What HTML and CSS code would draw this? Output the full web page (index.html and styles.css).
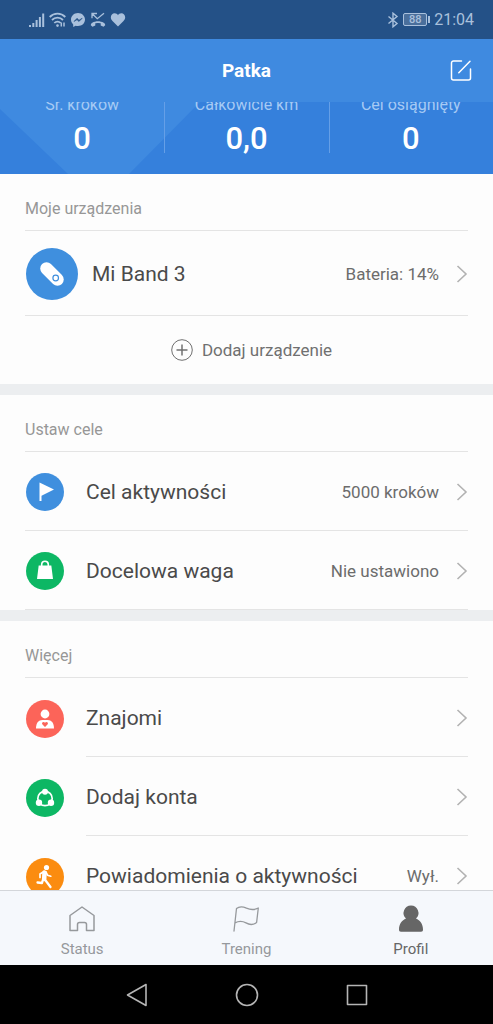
FILE: index.html
```html
<!DOCTYPE html>
<html lang="pl">
<head>
<meta charset="utf-8">
<meta name="viewport" content="width=device-width, initial-scale=1">
<title>Profil</title>
<link rel="stylesheet" href="styles.css">
</head>
<body>
<div class="app">
  <div class="status-bar">
    <div class="status-group">
      <svg width="16" height="16" viewBox="0 0 16 16" fill="currentColor"><path d="M0 13h2v2H0zM3.300 11h2v4h-2zM6.600 8h2v7h-2zM9.900 5h2v10h-2zM13.200 1.500h2V15h-2z"/></svg>
      <svg width="17" height="16" viewBox="0 0 17 16" fill="none" stroke="currentColor" stroke-width="1.800"><path d="M.7 5C5 .6 12 .6 16.300 5M3 8c3-3.100 8-3.100 11 0M5.300 11c1.800-1.900 4.600-1.900 6.400 0"/><circle cx="8.500" cy="13.600" r="1.300" fill="currentColor" stroke="none"/><path d="M12.300 10.500v4M15 10.500v4" stroke-width="1.500"/></svg>
      <svg width="16" height="16" viewBox="0 0 16 16"><path fill="currentColor" d="M8 1C4 1 1 3.900 1 7.600c0 2 .8 3.600 2.200 4.800V15l2.400-1.200c.8.2 1.600.3 2.400.3 4 0 7-2.800 7-6.500S12 1 8 1z"/><path d="M4 9.500l3-3.200 2 1.900 3.200-2L9 9.500 7 7.700z" fill="#245187" stroke="#245187" stroke-width=".6"/></svg>
      <svg width="16" height="16" viewBox="0 0 16 16" fill="none" stroke="currentColor"><path d="M7 1.500H2v4.800M2.300 1.800l5 4.900 6.700-5.500" stroke-width="1.300"/><path d="M.8 13.200c0-1 .5-1.900 1.500-2.500 3.300-2 8-2 11.400 0 1 .6 1.500 1.500 1.500 2.500l-1.700 1.500-2.800-1.300v-2.100a9 9 0 0 0-5.400 0v2.100l-2.800 1.300z" fill="currentColor" stroke="none"/></svg>
      <svg width="16" height="16" viewBox="0 0 16 16" fill="currentColor"><path d="M8 14.500L2.500 9C-.8 5.500 1.200 1.300 4.700 1.300c1.400 0 2.600.7 3.300 1.900.7-1.200 1.900-1.900 3.300-1.900 3.500 0 5.500 4.200 2.200 7.700z"/></svg>
    </div>
    <div class="status-group">
      <svg width="12" height="16" viewBox="0 0 12 16" fill="none" stroke="currentColor" stroke-width="1.400"><path d="M1.500 4.500l8.500 7-4 3.300V1.200l4 3.300-8.500 7"/></svg>
      <span class="battery"><span class="battery-level">88</span></span>
      <span class="clock">21:04</span>
    </div>
  </div>

  <header class="title-bar">
    <h1 class="title">Patka</h1>
    <button class="edit" aria-label="Edytuj">
      <svg width="22" height="22" viewBox="0 0 22 22" fill="none" stroke="currentColor" stroke-width="1.500" stroke-linecap="round" stroke-linejoin="round"><path d="M11.500 1H3.500A2 2 0 0 0 1.500 3v15a2 2 0 0 0 2 2h15a2 2 0 0 0 2-2V9M8.800 12.700L20 1.200"/></svg>
    </button>
  </header>

  <section class="stats">
    <div class="stat"><span class="stat-label">Śr. kroków</span><span class="stat-value">0</span></div>
    <div class="stat"><span class="stat-label">Całkowicie km</span><span class="stat-value">0,0</span></div>
    <div class="stat"><span class="stat-label">Cel osiągnięty</span><span class="stat-value">0</span></div>
  </section>

  <main class="content">
    <section class="card">
      <h2 class="card-title">Moje urządzenia</h2>
      <a class="row row-device" href="#">
        <svg class="row-icon" width="52" height="52" viewBox="0 0 52 52"><circle cx="26" cy="26" r="26" fill="#3f8fde"/><path d="M20.500 20.500l11 11" stroke="#fff" stroke-width="12.500" stroke-linecap="round"/><circle cx="29.700" cy="30" r="2.800" fill="none" stroke="#3f8fde" stroke-width="1.200"/></svg>
        <span class="row-body"><span class="row-name">Mi Band 3</span><span class="row-value">Bateria: 14%</span><svg class="chevron" width="12" height="20" viewBox="0 0 12 20"><path d="M1.500 2l8.500 8-8.500 8"/></svg></span>
      </a>
      <button class="add-device">
        <svg width="22" height="22" viewBox="0 0 22 22" fill="none" stroke="currentColor"><circle cx="11" cy="11" r="10.300" stroke-width="1"/><path d="M11 5.500v11M5.500 11h11" stroke-width="1.500"/></svg>
        <span>Dodaj urządzenie</span>
      </button>
    </section>

    <section class="card">
      <h2 class="card-title">Ustaw cele</h2>
      <a class="row" href="#">
        <svg class="row-icon" width="38" height="38" viewBox="0 0 38 38"><circle cx="19" cy="19" r="19" fill="#3f8fde"/><path d="M13.500 9.500l14.500 7-12.500 6.200V28h-2z" fill="#fff"/></svg>
        <span class="row-body"><span class="row-name">Cel aktywności</span><span class="row-value">5000 kroków</span><svg class="chevron" width="12" height="20" viewBox="0 0 12 20"><path d="M1.500 2l8.500 8-8.500 8"/></svg></span>
      </a>
      <a class="row" href="#">
        <svg class="row-icon" width="38" height="38" viewBox="0 0 38 38"><circle cx="19" cy="19" r="19" fill="#0db764"/><path d="M12.700 13.500h12.600L27 27H11z" fill="#fff"/><path d="M15.700 14v-1.500a3.300 3.300 0 0 1 6.600 0V14" fill="none" stroke="#fff" stroke-width="1.600"/></svg>
        <span class="row-body"><span class="row-name">Docelowa waga</span><span class="row-value">Nie ustawiono</span><svg class="chevron" width="12" height="20" viewBox="0 0 12 20"><path d="M1.500 2l8.500 8-8.500 8"/></svg></span>
      </a>
    </section>

    <section class="card card-inset">
      <h2 class="card-title">Więcej</h2>
      <a class="row" href="#">
        <svg class="row-icon" width="38" height="38" viewBox="0 0 38 38"><circle cx="19" cy="19" r="19" fill="#fc6459"/><circle cx="19" cy="14" r="4.400" fill="#fff"/><path d="M10 28.500c0-5.800 2.700-8.500 6.300-8.500h5.400c3.600 0 6.300 2.700 6.300 8.500z" fill="#fff"/><path d="M19 27l-2.500-2.500c-1.500-1.600.9-3.600 2.500-1.800 1.600-1.800 4 .2 2.500 1.800z" fill="#fc6459"/></svg>
        <span class="row-body"><span class="row-name">Znajomi</span><svg class="chevron" width="12" height="20" viewBox="0 0 12 20"><path d="M1.500 2l8.500 8-8.500 8"/></svg></span>
      </a>
      <a class="row" href="#">
        <svg class="row-icon" width="38" height="38" viewBox="0 0 38 38"><circle cx="19" cy="19" r="19" fill="#0db764"/><circle cx="19" cy="19.500" r="7.200" fill="none" stroke="#fff" stroke-width="1.700"/><g fill="#fff"><circle cx="19" cy="12.700" r="3"/><circle cx="13" cy="23.700" r="3.200"/><circle cx="25" cy="23.700" r="3.200"/></g></svg>
        <span class="row-body"><span class="row-name">Dodaj konta</span><svg class="chevron" width="12" height="20" viewBox="0 0 12 20"><path d="M1.500 2l8.500 8-8.500 8"/></svg></span>
      </a>
      <a class="row" href="#">
        <svg class="row-icon" width="38" height="38" viewBox="0 0 38 38"><circle cx="19" cy="19" r="19" fill="#fb8c10"/><circle cx="20.500" cy="9.500" r="2.600" fill="#fff"/><g fill="none" stroke="#fff" stroke-linecap="round" stroke-linejoin="round"><path d="M18.500 14.500l-.3 6.500" stroke-width="4.500"/><path d="M18 13.500l-4 2.500v3.500M20 14l1.500 3.200 3.300 1" stroke-width="1.700"/><path d="M18.800 21.500l2.700 3.500 3 4M17 21.500l-1 3.500-4.500-.5" stroke-width="2.300"/></g></svg>
        <span class="row-body"><span class="row-name">Powiadomienia o aktywności</span><span class="row-value">Wył.</span><svg class="chevron" width="12" height="20" viewBox="0 0 12 20"><path d="M1.500 2l8.500 8-8.500 8"/></svg></span>
      </a>
    </section>
  </main>

  <nav class="tabs">
    <a class="tab" href="#">
      <svg width="28" height="28" viewBox="0 0 28 28" fill="none" stroke="currentColor" stroke-width="1.500" stroke-linejoin="round"><path d="M2 10.500L14 2l12 8.500v15h-7.500v-6q0-2-2-2h-5q-2 0-2 2v6H2z"/></svg>
      <span>Status</span>
    </a>
    <a class="tab" href="#">
      <svg width="28" height="28" viewBox="0 0 28 28" fill="none" stroke="currentColor" stroke-width="1.300" stroke-linecap="round" stroke-linejoin="round"><path d="M2 26L4.500 3.500c3-2.500 6.500-2 10-.3 4 1.700 8 1.800 11.800-.2l-1.700 14.500c-3.300 2.500-7 2.500-10.600.4-4-2.200-7-2.200-11 0"/></svg>
      <span>Trening</span>
    </a>
    <a class="tab tab-active" href="#" aria-current="page">
      <svg width="28" height="28" viewBox="0 0 28 28" fill="currentColor"><path d="M14 .5a7.500 7.500 0 0 0-5 13c-4 1.700-7 5.500-7 11 0 1.500.6 2.200 2 2.200h20c1.400 0 2-.7 2-2.200 0-5.500-3-9.300-7-11a7.500 7.500 0 0 0-5-13z"/></svg>
      <span>Profil</span>
    </a>
  </nav>

  <div class="system-nav">
    <button class="system-button" aria-label="Wstecz"><svg width="24" height="24" viewBox="0 0 24 24"><path d="M21 1.500v21L2.500 12z"/></svg></button>
    <button class="system-button" aria-label="Ekran główny"><svg width="24" height="24" viewBox="0 0 24 24"><circle cx="12" cy="12" r="10.500"/></svg></button>
    <button class="system-button" aria-label="Ostatnie"><svg width="24" height="24" viewBox="0 0 24 24"><path d="M2.500 2.500h19v19h-19z"/></svg></button>
  </div>
</div>
</body>
</html>
```

FILE: styles.css
```css
* {
  box-sizing: border-box;
}

body {
  margin: 0;
  font-family: Roboto, "Noto Sans", sans-serif;
  color: #4a4a4a;
}

h1,
h2 {
  margin: 0;
}

a {
  color: inherit;
  text-decoration: none;
}

button {
  padding: 0;
  border: 0;
  background: none;
  color: inherit;
  font: inherit;
}

svg {
  display: block;
  flex: none;
}

.app {
  display: flex;
  flex-direction: column;
  height: 100vh;
  overflow: hidden;
  background: #fdfdfd;
}

.status-bar {
  display: flex;
  flex: none;
  align-items: center;
  justify-content: space-between;
  height: 39px;
  padding: 0 19px 0 29px;
  background: #245187;
  color: #a9c0dc;
}

.status-group {
  display: flex;
  align-items: center;
  gap: 4px;
}

.battery {
  display: flex;
  align-items: center;
  gap: 1px;
}

.battery::after {
  content: "";
  width: 2px;
  height: 7px;
  background: currentColor;
}

.battery-level {
  width: 24px;
  border: 1px solid currentColor;
  border-radius: 2px;
  background: #4a6f9c;
  font-size: 11px;
  font-weight: 500;
  line-height: 11px;
  text-align: center;
}

.clock {
  font-size: 16px;
  line-height: 20px;
}

.title-bar {
  display: grid;
  flex: none;
  grid-template-columns: 1fr auto 1fr;
  align-items: center;
  height: 63px;
  padding: 0 21px;
  background: #3f8ae0;
  color: #fff;
}

.title {
  grid-column: 2;
  font-size: 19px;
  font-weight: 700;
  line-height: 24px;
}

.edit {
  justify-self: end;
}

.stats {
  position: relative;
  display: flex;
  flex: none;
  height: 72px;
  overflow: hidden;
  background: #3580dc;
  color: #fff;
}

.stats::before {
  content: "";
  position: absolute;
  inset: 0 auto 0 0;
  width: 200px;
  background: #3f8ae0;
  clip-path: polygon(0 0, 100% 0, 129px 100%, 68px 100%, 0 7px);
}

.stat {
  position: relative;
  display: flex;
  flex: 1;
  flex-direction: column;
  align-items: center;
  justify-content: flex-end;
  gap: 3px;
  padding-bottom: 14px;
}

.stat + .stat::before {
  content: "";
  position: absolute;
  top: 0;
  bottom: 21px;
  left: 0;
  width: 1px;
  background: #659fe7;
}

.stat-label {
  color: #a6caf4;
  font-size: 16px;
  line-height: 20px;
}

.stat-value {
  font-size: 31px;
  font-weight: 500;
  line-height: 42px;
}

.content {
  flex: 1;
  min-height: 0;
  overflow: hidden;
}

.card + .card {
  border-top: 11px solid #eceef0;
}

.card-title {
  height: 57px;
  margin: 0 25px;
  padding-top: 12px;
  border-bottom: 1px solid #e4e4e4;
  color: #979797;
  font-size: 16px;
  font-weight: 400;
  line-height: 45px;
}

.row {
  display: flex;
  align-items: center;
  height: 79px;
  margin: 0 25px;
  padding: 2px 0 0 1px;
  border-bottom: 1px solid #e4e4e4;
}

.row-body {
  display: flex;
  flex: 1;
  align-items: center;
  align-self: stretch;
  margin-left: 22px;
}

.row-device {
  height: 85px;
}

.row-device .row-body {
  margin-left: 14px;
}

.card-inset .row {
  border-bottom: 0;
}

.card-inset .row-body {
  border-bottom: 1px solid #e4e4e4;
}

.row-name {
  flex: 1;
  font-size: 21px;
  line-height: 24px;
}

.row-value {
  color: #6c6c6c;
  font-size: 17px;
  line-height: 20px;
}

.chevron {
  margin-left: 17px;
  fill: none;
  stroke: #b2b2b2;
  stroke-width: 1.6;
}

.add-device {
  display: flex;
  align-items: center;
  justify-content: center;
  gap: 9px;
  width: 100%;
  height: 68px;
  padding: 0 0 0 10px;
  color: #707070;
  font-size: 17px;
  line-height: 20px;
}

.tabs {
  display: flex;
  flex: none;
  height: 75px;
  border-top: 1px solid #d3d6da;
  background: #f5f8fc;
}

.tab {
  display: flex;
  flex: 1;
  flex-direction: column;
  align-items: center;
  gap: 6px;
  padding-top: 14px;
  color: #96999c;
  font-size: 15px;
  line-height: 20px;
}

.tab-active {
  color: #666;
}

.system-nav {
  display: flex;
  flex: none;
  align-items: center;
  justify-content: center;
  gap: 86px;
  height: 59px;
  background: #000;
}

.system-button svg {
  fill: none;
  stroke: #b5b5b5;
  stroke-width: 1.6;
  stroke-linejoin: round;
}
```
